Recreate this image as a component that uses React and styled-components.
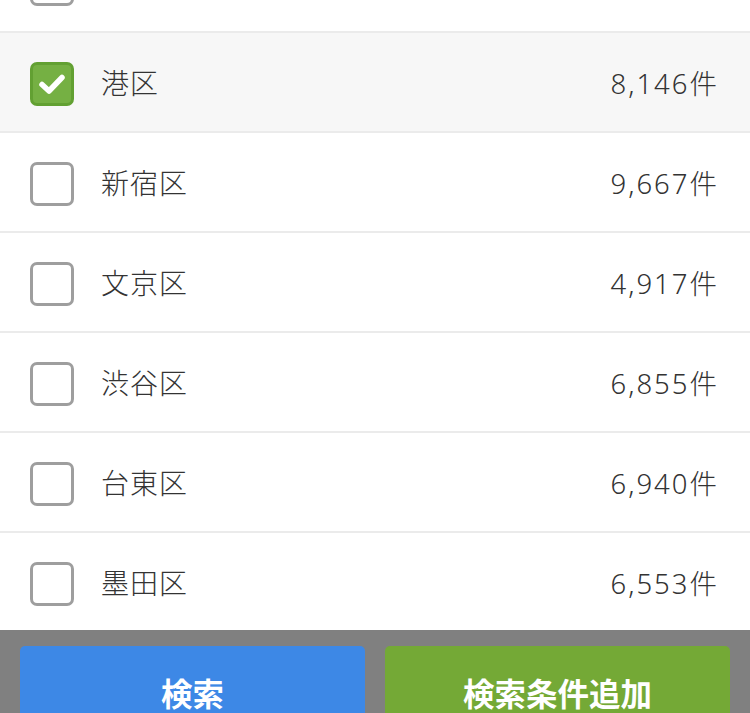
import React, { useState } from 'react';
import styled, { createGlobalStyle } from 'styled-components';

const GlobalStyle = createGlobalStyle`
  html, body {
    margin: 0;
    padding: 0;
    background: #fff;
    overflow: hidden;
  }
  body {
    font-family: "Noto Sans CJK JP", "Noto Sans", sans-serif;
    color: #333;
  }
`;

const List = styled.ul`
  list-style: none;
  margin: -67px 0 0;
  padding: 0;
`;

const Row = styled.li`
  display: flex;
  align-items: center;
  height: 95px;
  padding: 3px 31px 0 30px;
  border-bottom: 2px solid #ebebeb;
  background: ${p => (p.checked ? '#f7f7f7' : '#fff')};
  cursor: pointer;
`;

const Box = styled.span`
  flex: none;
  width: 44px;
  height: 44px;
  box-sizing: border-box;
  border-radius: 7px;
  border: 3px solid ${p => (p.checked ? '#62a032' : '#9e9e9e')};
  background: ${p => (p.checked ? '#75b043' : '#fff')};
  display: flex;
  align-items: center;
  justify-content: center;
`;

const Label = styled.span`
  flex: 1;
  margin-left: 27px;
  margin-top: -4px;
  font-size: 28px;
  font-weight: 300;
  letter-spacing: 1px;
`;

const Count = styled.span`
  margin-top: -4px;
  font-family: "Noto Sans", "Noto Sans CJK JP", sans-serif;
  font-size: 27.5px;
  font-weight: 300;
  letter-spacing: 2px;
`;

const Footer = styled.div`
  position: fixed;
  left: 0;
  right: 0;
  top: 630px;
  height: 120px;
  background: #808080;
  display: grid;
  grid-template-columns: 1fr 1fr;
  gap: 20px;
  padding: 16px 20px 0;
  box-sizing: border-box;
`;

const Button = styled.button`
  height: 92px;
  border: none;
  border-radius: 5px;
  background: ${p => p.bg};
  color: #fff;
  font-family: "Noto Sans CJK JP", sans-serif;
  font-size: 31.5px;
  font-weight: 700;
  padding: 0;
  cursor: pointer;
`;

const wards = [
  { name: '千代田区', count: '3,210件' },
  { name: '港区', count: '8,146件', checked: true },
  { name: '新宿区', count: '9,667件' },
  { name: '文京区', count: '4,917件' },
  { name: '渋谷区', count: '6,855件' },
  { name: '台東区', count: '6,940件' },
  { name: '墨田区', count: '6,553件' },
];

function Check() {
  return (
    <svg width="28" height="22" viewBox="0 0 28 22">
      <path d="M4 11.5 L11 18 L24 4.5" fill="none" stroke="#fff" strokeWidth="5.5" strokeLinecap="round" strokeLinejoin="round" />
    </svg>
  );
}

export default function App() {
  const [selected, setSelected] = useState(wards.filter(w => w.checked).map(w => w.name));

  const toggle = name => {
    if (selected.includes(name)) {
      setSelected(selected.filter(n => n !== name));
    } else {
      setSelected([...selected, name]);
    }
  };

  return (
    <>
      <GlobalStyle />
      <List>
        {wards.map(w => {
          const on = selected.includes(w.name);
          return (
            <Row key={w.name} checked={on} onClick={() => toggle(w.name)}>
              <Box checked={on}>{on && <Check />}</Box>
              <Label>{w.name}</Label>
              <Count>{w.count}</Count>
            </Row>
          );
        })}
      </List>
      <Footer>
        <Button bg="#3d88e6">検索</Button>
        <Button bg="#74a936">検索条件追加</Button>
      </Footer>
    </>
  );
}
